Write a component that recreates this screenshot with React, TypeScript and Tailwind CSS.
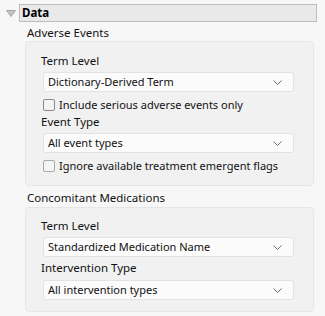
import React from "react";

const font = { fontFamily: '"Noto Sans", "Open Sans", sans-serif' };

function Chevron() {
  return (
    <svg width="9" height="5" viewBox="0 0 9 5" className="mr-[11px]">
      <path d="M0.5 0.5 L4.5 4.5 L8.5 0.5" fill="none" stroke="#6f6f6f" strokeWidth="1" />
    </svg>
  );
}

function Select({ value }: { value: string }) {
  return (
    <div className="flex items-center justify-between h-[20px] ml-[2px] w-[251px] bg-[#fbfbfb] border border-[#e3e3e3] rounded-[3px] pl-[4px] text-[11px] text-[#111]">
      <span className="leading-[16px]">{value}</span>
      <Chevron />
    </div>
  );
}

function Check({ label, light }: { label: string; light?: boolean }) {
  return (
    <div className="flex items-center h-[17px] ml-[2px] text-[11px] text-[#111]">
      <div
        className={
          "w-[12px] h-[12px] rounded-[2px] border bg-[#f4f4f4] " +
          (light ? "border-[#a9a9a9]" : "border-[#8a8a8a]")
        }
      />
      <span className="ml-[4px] leading-[16px]">{label}</span>
    </div>
  );
}

function Label({ text, className = "" }: { text: string; className?: string }) {
  return <div className={"h-[16px] leading-[16px] text-[11.5px] text-[#111] " + className}>{text}</div>;
}

export default function App() {
  return (
    <div className="w-[325px] h-[316px] bg-[#f7f7f7] overflow-hidden" style={font}>
      <div className="flex items-center pt-[4px] pl-[6px]">
        <svg width="10" height="7" viewBox="0 0 10 7">
          <path d="M0.5 0.5 L9.5 0.5 L5 6.5 Z" fill="#c4c4c4" stroke="#a4a4a4" strokeWidth="1" strokeLinejoin="round" />
        </svg>
        <div className="ml-[3px] w-[298px] h-[18px] border border-[#bdbdbd] bg-[#e9e9e9] pl-[2px] text-[11.5px] font-bold leading-[16px] text-black">
          Data
        </div>
      </div>
      <div className="pl-[25px]">
        <div className="mt-[2px] h-[17px] leading-[17px] pl-[2px] text-[11.5px] text-[#111]">Adverse Events</div>
        <div className="w-[289px] bg-[#f1f1f1] border border-[#e6e6e6] rounded-[4px] pt-[11px] pb-[11px] pl-[15px]">
          <Label text="Term Level" />
          <div className="mt-[3px]">
            <Select value="Dictionary-Derived Term" />
          </div>
          <div className="mt-[4px]">
            <Check label="Include serious adverse events only" />
          </div>
          <Label text="Event Type" className="mt-[1px]" />
          <div className="mt-[3px]">
            <Select value="All event types" />
          </div>
          <div className="mt-[4px]">
            <Check label="Ignore available treatment emergent flags" light />
          </div>
        </div>
        <div className="mt-[3px] h-[18px] leading-[18px] pl-[2px] text-[11.5px] text-[#111]">Concomitant Medications</div>
        <div className="w-[289px] bg-[#f1f1f1] border border-[#e6e6e6] rounded-[4px] pt-[10px] pb-[11px] pl-[15px]">
          <Label text="Term Level" />
          <div className="mt-[3px]">
            <Select value="Standardized Medication Name" />
          </div>
          <Label text="Intervention Type" className="mt-[3px]" />
          <div className="mt-[4px]">
            <Select value="All intervention types" />
          </div>
        </div>
      </div>
    </div>
  );
}
